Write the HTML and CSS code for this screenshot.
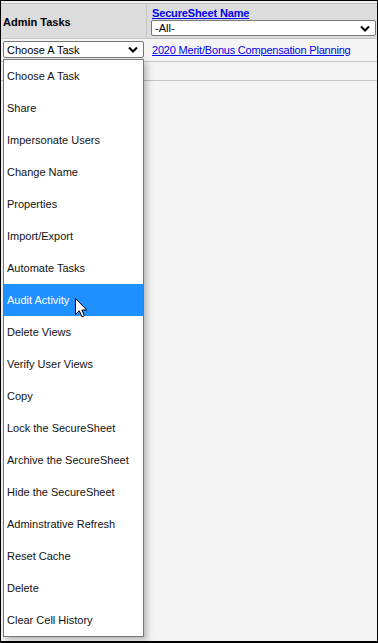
FILE: index.html
```html
<!DOCTYPE html>
<html lang="en">
    <head>
        <meta charset="UTF-8">
        <meta name="viewport" content="width=device-width, initial-scale=1.0">
        <title>Admin Tasks</title>
        <link rel="stylesheet" href="styles.css">
    </head>
    <body>
        <div class="frame">
            <div class="gap"></div>
            <div class="row head">
                <div class="cell tasks">Admin Tasks</div>
                <div class="cell name">
                    <a href="#" class="sort">SecureSheet Name</a>
                    <div class="select wide">
                        <span>-All-</span>
                        <svg width="10" height="7" viewBox="0 0 10 7"><path d="M1 1.5 L5 5.5 L9 1.5" fill="none" stroke="#000" stroke-width="2"/></svg>
                    </div>
                </div>
            </div>
            <div class="row data">
                <div class="cell pick">
                    <div class="select">
                        <span>Choose A Task</span>
                        <svg width="10" height="7" viewBox="0 0 10 7"><path d="M1 1.5 L5 5.5 L9 1.5" fill="none" stroke="#000" stroke-width="2"/></svg>
                    </div>
                </div>
                <div class="cell sheet">
                    <a href="#">2020 Merit/Bonus Compensation Planning</a>
                </div>
            </div>
            <div class="row blank"></div>

            <!-- open task list -->
            <ul class="menu">
                <li>Choose A Task</li>
                <li>Share</li>
                <li>Impersonate Users</li>
                <li>Change Name</li>
                <li>Properties</li>
                <li>Import/Export</li>
                <li>Automate Tasks</li>
                <li class="active">Audit Activity</li>
                <li>Delete Views</li>
                <li>Verify User Views</li>
                <li>Copy</li>
                <li>Lock the SecureSheet</li>
                <li>Archive the SecureSheet</li>
                <li>Hide the SecureSheet</li>
                <li>Adminstrative Refresh</li>
                <li>Reset Cache</li>
                <li>Delete</li>
                <li>Clear Cell History</li>
            </ul>
            <svg class="cursor" width="13" height="20" viewBox="0 0 13 20">
                <path d="M0.5 0.5 L0.5 16.5 L4.3 12.8 L7 18.8 L9.4 17.8 L6.8 12 L11.8 12 Z" fill="#fff" stroke="#000" stroke-width="1" stroke-linejoin="round"/>
            </svg>
        </div>
    </body>
</html>
```

FILE: styles.css
```css
:root {
    --head-bg: #dcdcdc;
    --row-bg:  #f4f4f4;
    --line:    #c4c4c4;
    --link:    #0000ee;
    --hi:      #1e90ff;
}
* {
    box-sizing: border-box;
}
body {
    margin: 0px;
    font-family: "Liberation Sans", Arial, sans-serif;
    font-size: 11px;
    color: #000;
}
.frame {
    position: relative;
    width: 378px;
    height: 643px;
    border: 1px solid #000;
    border-bottom-width: 2px;
    background: var(--row-bg);
}
.gap {
    height: 3px;
    background: #f0f0f0;
    border-bottom: 1px solid var(--line);
}
.row {
    display: grid;
    grid-template-columns: 146px 1fr;
    border-bottom: 1px solid var(--line);
}
.head {
    height: 35px;
    background: var(--head-bg);
}
.head > .tasks {
    display: flex;
    align-items: center;
    padding-left: 2px;
    padding-top: 1px;
    font-weight: bold;
    border-right: 1px solid var(--line);
}
.head > .name {
    display: flex;
    flex-direction: column;
    padding: 3px 1px 0px 4px;
}
a {
    color: var(--link);
}
a.sort {
    font-weight: bold;
    line-height: 12px;
    padding-left: 1px;
    letter-spacing: -0.15px;
}
.select {
    display: flex;
    align-items: center;
    justify-content: space-between;
    height: 17px;
    padding: 0px 5px 0px 3px;
    background: #fff;
    border: 1px solid #767676;
    border-radius: 2px;
}
.select.wide {
    margin-top: 1px;
    height: 16px;
    width: 225px;
}
.data {
    height: 23px;
}
.data > .pick {
    padding: 2px 0px 0px 2px;
}
.data > .pick > .select {
    width: 141px;
}
.data > .sheet {
    display: flex;
    align-items: center;
    padding-left: 5px;
}
.data > .sheet > a {
    letter-spacing: -0.2px;
}
.blank {
    display: block;
    height: 19px;
}
/* #region Menu */
.menu {
    position: absolute;
    top: 58px;
    left: 2px;
    width: 141px;
    margin: 0px;
    padding: 0px;
    list-style: none;
    background: #fff;
    border: 1px solid #767676;
    box-shadow: 3px 3px 6px rgba(0, 0, 0, 0.25);
}
.menu > li {
    height: 32px;
    line-height: 32px;
    padding-left: 3px;
    color: #111;
}
.menu > li.active {
    background: var(--hi);
    color: #fff;
}
.cursor {
    position: absolute;
    top: 297px;
    left: 74px;
}
/* #endregion Menu */
```
